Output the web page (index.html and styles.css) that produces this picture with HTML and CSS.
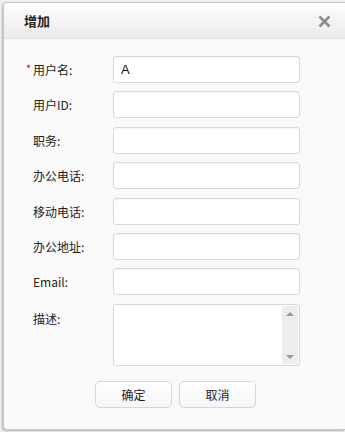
FILE: index.html
```html
<!DOCTYPE html>
<html lang="zh">
<head>
  <meta charset="UTF-8">
  <title>增加</title>
  <link rel="stylesheet" href="styles.css">
</head>
<body>
  <div class="dialog">
    <div class="dialog-head">
      <span class="dialog-title">增加</span>
      <svg class="dialog-close" width="13" height="13" viewBox="0 0 13 13">
        <path d="M1.5 1.5 L11.5 11.5 M11.5 1.5 L1.5 11.5" stroke="#8c8c8c" stroke-width="2.6" fill="none"/>
      </svg>
    </div>
    <div class="dialog-body">
      <div class="row">
        <label class="lbl"><span class="req">*</span>用户名:</label>
        <input class="field" type="text" value="A">
      </div>
      <div class="row">
        <label class="lbl">用户ID:</label>
        <input class="field" type="text">
      </div>
      <div class="row">
        <label class="lbl">职务:</label>
        <input class="field" type="text">
      </div>
      <div class="row">
        <label class="lbl">办公电话:</label>
        <input class="field" type="text">
      </div>
      <div class="row">
        <label class="lbl">移动电话:</label>
        <input class="field" type="text">
      </div>
      <div class="row">
        <label class="lbl">办公地址:</label>
        <input class="field" type="text">
      </div>
      <div class="row">
        <label class="lbl">Email:</label>
        <input class="field" type="text">
      </div>
      <div class="row row-top">
        <label class="lbl">描述:</label>
        <div class="area">
          <div class="area-text"></div>
          <div class="area-bar">
            <span class="arrow up"></span>
            <span class="arrow down"></span>
          </div>
        </div>
      </div>
      <div class="buttons">
        <button class="btn">确定</button>
        <button class="btn">取消</button>
      </div>
    </div>
  </div>
</body>
</html>
```

FILE: styles.css
```css
* {
  margin: 0;
  padding: 0;
  box-sizing: border-box;
}
body {
  background: #f0f0f0;
  font-family: "Noto Sans CJK SC", "Liberation Sans", sans-serif;
  font-size: 12px;
  color: #222;
  padding: 2px 0 2px 3px;
  height: 432px;
  overflow: hidden;
}

/* kotak dialog */
.dialog {
  height: 428px;
  background: #f9f9f9;
  border: 1px solid #c8c8c8;
  border-right: none;
  border-radius: 4px 0 0 4px;
  box-shadow: -1px 1px 2px rgba(0, 0, 0, 0.25);
}
.dialog-head {
  height: 36px;
  display: flex;
  align-items: center;
  justify-content: space-between;
  padding: 0 14px 0 20px;
  background: linear-gradient(#fdfdfd, #ebebeb);
  border-bottom: 1px solid #e2e2e2;
  border-radius: 4px 0 0 0;
}
.dialog-title {
  font-size: 13px;
  font-weight: bold;
  color: #222;
}
.dialog-close {
  display: block;
  margin-top: 2px;
}

/* isi form */
.dialog-body {
  padding: 17px 0 0 0;
}
.row {
  display: flex;
  align-items: center;
  height: 27px;
  margin-bottom: 8.4px;
}
.row-top {
  align-items: flex-start;
  height: auto;
}
.lbl {
  width: 109px;
  padding-left: 29px;
  font-size: 12px;
  color: #222;
  position: relative;
}
.row-top .lbl {
  padding-top: 6px;
}
.req {
  position: absolute;
  left: 22px;
  top: -1px;
  color: #d00;
  font-size: 11px;
}
.field {
  width: 187px;
  height: 27px;
  border: 1px solid #d8d8d8;
  border-radius: 3px;
  background: #fff;
  padding: 0 7px;
  font-family: "Liberation Sans", sans-serif;
  font-size: 13px;
  color: #111;
  box-shadow: inset 0 1px 1px rgba(0, 0, 0, 0.04);
}

/* textarea dengan scrollbar */
.area {
  width: 187px;
  height: 62px;
  border: 1px solid #d8d8d8;
  border-radius: 3px;
  background: #fff;
  display: flex;
}
.area-text {
  flex: 1;
}
.area-bar {
  width: 16px;
  margin: 1px;
  background: #ededed;
  display: flex;
  flex-direction: column;
  justify-content: space-between;
  align-items: center;
  padding: 6px 0 5px;
}
.arrow {
  width: 0;
  height: 0;
  border-left: 4px solid transparent;
  border-right: 4px solid transparent;
}
.arrow.up {
  border-bottom: 4px solid #999;
}
.arrow.down {
  border-top: 4px solid #999;
}

/* tombol */
.buttons {
  display: flex;
  gap: 7px;
  padding-left: 91px;
  margin-top: 15px;
}
.btn {
  width: 77px;
  height: 27px;
  border: 1px solid #d6d6d6;
  border-radius: 5px;
  background: linear-gradient(#ffffff, #f6f6f6);
  font-family: "Noto Sans CJK SC", sans-serif;
  font-size: 12px;
  color: #222;
}
```
